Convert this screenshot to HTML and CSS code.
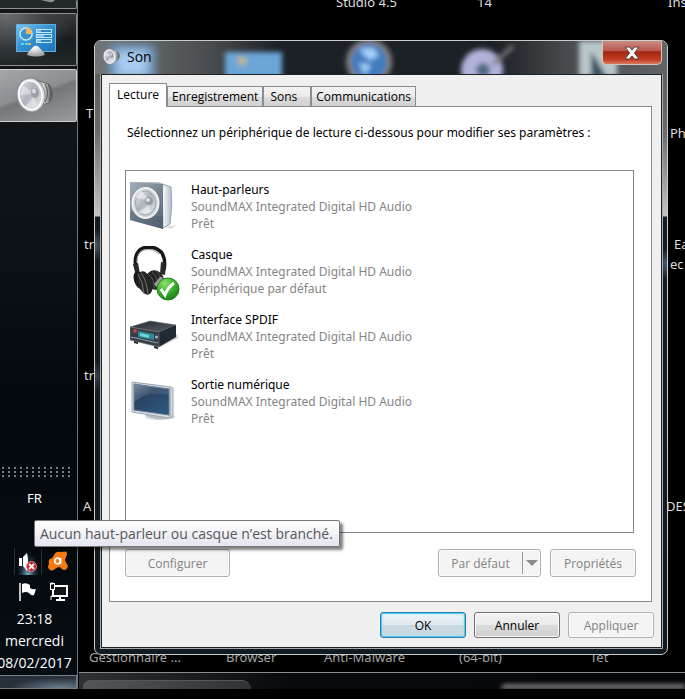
FILE: index.html
```html
<!DOCTYPE html>
<html lang="fr">
<head>
<meta charset="utf-8">
<title>Son</title>
<link rel="stylesheet" href="styles.css">
</head>
<body>
<div class="screen">
  <aside class="taskbar">
    <div class="task task-cut">
      <svg width="20" height="4" viewBox="0 0 20 4" aria-hidden="true"><path d="M3 0h14q-2 3-6 2z" fill="#8b8e90"/></svg>
    </div>
    <button class="task" aria-label="Panneau de configuration">
      <svg width="44" height="36" viewBox="0 0 44 36" aria-hidden="true">
        <defs>
          <linearGradient id="cp" x1="0" y1="0" x2="1" y2="1"><stop offset="0" stop-color="#7cc4ee"/><stop offset=".5" stop-color="#2f8fd0"/><stop offset="1" stop-color="#1f74b8"/></linearGradient>
          <radialGradient id="dome" cx=".4" cy=".2" r=".9"><stop offset="0" stop-color="#fff"/><stop offset="1" stop-color="#8f8f8f"/></radialGradient>
        </defs>
        <rect x="2.500" y="2.500" width="39" height="27" fill="url(#cp)" stroke="#5eaee0"/>
        <circle cx="12" cy="12" r="6" fill="#3a93d2" stroke="#c9ecfb" stroke-width="1.500"/>
        <path d="M12 12V5a7 7 0 0 1 6 7z" fill="#f8b55a"/>
        <g fill="#2f86c6" stroke="#bfe8fb"><rect x="22.500" y="7.500" width="15" height="3"/><rect x="22.500" y="12.500" width="15" height="3"/><rect x="22.500" y="17.500" width="15" height="3"/></g>
        <path d="M27 9h-4M30 14h-7M27 19h-4" stroke="#eafaff" stroke-width="1"/>
        <path d="M7 22h3M11 22h3" stroke="#56d4f4" stroke-width="2"/><path d="M14 22h3" stroke="#f4a94a" stroke-width="2"/>
        <path d="M13 33c1-4 4-5 6-8q3-3 6 0c2 3 5 4 6 8q-9 3-18 0z" fill="url(#dome)"/>
      </svg>
    </button>
    <button class="task task-active" aria-label="Son">
      <svg width="44" height="44" viewBox="0 0 44 44" aria-hidden="true">
        <defs>
          <linearGradient id="cone" x1="0" y1="0" x2="1" y2="1"><stop offset="0" stop-color="#e9ebee"/><stop offset=".45" stop-color="#aeb4bc"/><stop offset="1" stop-color="#e6e9ec"/></linearGradient>
          <linearGradient id="mag" x1="0" y1="0" x2="1" y2="0"><stop offset="0" stop-color="#777"/><stop offset=".5" stop-color="#ddd"/><stop offset="1" stop-color="#555"/></linearGradient>
        </defs>
        <g id="speaker">
          <path d="M20 5l11 4q5 0 7 7t-3 13l-8 2z" fill="url(#mag)" stroke="#666"/>
          <path d="M31 10q5 9 0 18M34 10q5 8 1 17" fill="none" stroke="#4f5358"/>
          <ellipse cx="17" cy="21" rx="14" ry="17" transform="rotate(-9 17 21)" fill="#d9dcdf" stroke="#85898e"/>
          <ellipse cx="16.500" cy="21" rx="11.500" ry="14.500" transform="rotate(-9 17 21)" fill="url(#cone)" stroke="#fff" stroke-width="1.500"/>
          <path d="M20 18L9 12l-3 9 13-1zM20 22l-9 11q7 4 12-2z" fill="#fff" opacity=".38"/>
          <ellipse cx="21" cy="19" rx="4" ry="5" fill="#9aa0a8"/><ellipse cx="20" cy="17" rx="2" ry="2.500" fill="#d8dce0"/>
        </g>
      </svg>
    </button>
    <div class="grow"></div>
    <div class="grip"></div>
    <div class="lang">FR</div>
    <div class="tray">
      <button class="tray-item tray-hot" aria-label="Haut-parleurs">
        <svg width="24" height="24" viewBox="0 0 24 24" aria-hidden="true"><path d="M3 8h3v8H3z" fill="#fff"/><path d="M7 7l4-4q2 9 0 18l-4-5z" fill="#fff"/><circle cx="15.500" cy="16.500" r="5" fill="#cf2029" stroke="#e98a8e" stroke-width=".8"/><path d="M13 14l5 5M18 14l-5 5" stroke="#fff" stroke-width="1.800"/></svg>
      </button>
      <button class="tray-item" aria-label="Antivirus">
        <svg width="24" height="24" viewBox="0 0 24 24" aria-hidden="true"><path d="M8 5Q10 1 14 2L20 1.500Q22 3 20 7L19 10Q20 13 22 16 21 20 18 20 16 20 14 17 11 17 9 19 5 22 3 19 1 17 3 14 2 10 4 9 7 8 8 5Z" fill="#f47a13"/><circle cx="11.500" cy="11" r="2.800" fill="none" stroke="#fff" stroke-width="1.700"/><path d="M14.500 8v6" stroke="#fff" stroke-width="1.700"/></svg>
      </button>
      <button class="tray-item" aria-label="Centre de maintenance">
        <svg width="24" height="24" viewBox="0 0 24 24" aria-hidden="true"><path d="M4 4v18" stroke="#fff" stroke-width="1.500"/><path d="M6 5q4-2 8 1v3q3 2 6 1l-2 6q-3 1-5-2-3-2-7 0z" fill="#fff"/></svg>
      </button>
      <button class="tray-item" aria-label="Réseau">
        <svg width="24" height="24" viewBox="0 0 24 24" aria-hidden="true" fill="none" stroke="#fff"><rect x="7" y="7" width="14" height="10" fill="#10161a" stroke-width="2"/><path d="M14 18v3M10 21h9" stroke-width="2"/><rect x="4.500" y="4.500" width="4" height="6" fill="#10161a"/><path d="M6 3v3M7 11v6H5v4"/></svg>
      </button>
    </div>
    <div class="clock"><span>23:18</span><span>mercredi</span><span>08/02/2017</span></div>
    <button class="show-desktop" aria-label="Afficher le Bureau"></button>
  </aside>

  <main class="desktop">
    <span class="label l-studio">Studio 4.5</span>
    <span class="label l-14">14</span>
    <span class="label l-ins">Ins</span>
    <span class="label l-t">T</span>
    <span class="label l-tr1">tr</span>
    <span class="label l-tr2">tr</span>
    <span class="label l-a">A</span>
    <span class="label l-ph">Ph</span>
    <span class="label l-ea">Ea</span>
    <span class="label l-ec">ec</span>
    <span class="label l-des">DES</span>
    <span class="label low l-gest">Gestionnaire ...</span>
    <span class="label low l-browser">Browser</span>
    <span class="label low l-anti">Anti-Malware</span>
    <span class="label low l-64">(64-bit)</span>
    <span class="label low l-ret">Tet</span>

    <div class="back-window">
      <div class="back-tab"></div>
      <div class="back-glow"></div>
    </div>

    <section class="dialog" aria-label="Son">
      <header class="titlebar">
        <svg class="glass" width="572" height="33" viewBox="0 0 572 33" aria-hidden="true">
          <defs><filter id="b" x="-30%" y="-30%" width="160%" height="160%"><feGaussianBlur stdDeviation="2.500"/></filter><filter id="bb" x="-50%" y="-50%" width="200%" height="200%"><feGaussianBlur stdDeviation="5"/></filter></defs>
          <g filter="url(#bb)"><rect x="14" y="4" width="46" height="34" fill="#6f9cc8"/><rect x="22" y="10" width="30" height="25" fill="#a9cdf0"/></g>
          <g filter="url(#b)">
            <rect x="130" y="11" width="57" height="26" fill="#6aa6d8"/><circle cx="147" cy="20" r="5" fill="#b9b48c"/>
            <circle cx="274" cy="21" r="23" fill="#857f7c"/><circle cx="274" cy="21" r="18" fill="#3f7cc0"/><path d="M264 8l14-1 6 8-10 4zM264 22l12 2-6 10z" fill="#a7d3fa"/>
            <circle cx="387" cy="29" r="21" fill="#b1b2da"/><circle cx="388" cy="29" r="7" fill="#4d6980"/><path d="M398 23L418 5" stroke="#777" stroke-width="4"/>
            <path d="M484 0h38v36h-38z" fill="#b9c6c9"/><path d="M496 10l16 26h-16z" fill="#3e5266"/>
          </g>
        </svg>
        <svg class="title-icon" width="20" height="20" viewBox="0 0 44 44" aria-hidden="true"><use href="#speaker"/></svg>
        <h1>Son</h1>
        <button class="close" aria-label="Fermer">
          <svg width="18" height="16" viewBox="0 0 18 16" aria-hidden="true"><path d="M2 2h4.500L9 5l2.500-3H16l-4.500 6L16 14h-4.500L9 11l-2.500 3H2l4.500-6z" fill="#f4f4f4" stroke="#5b3b3b"/></svg>
        </button>
      </header>

      <div class="client">
        <div class="tabs" role="tablist">
          <button role="tab" class="tab tab-on" aria-selected="true">Lecture</button>
          <button role="tab" class="tab">Enregistrement</button>
          <button role="tab" class="tab tab-sons">Sons</button>
          <button role="tab" class="tab">Communications</button>
        </div>
        <div class="panel">
          <p class="intro">Sélectionnez un périphérique de lecture ci-dessous pour modifier ses paramètres :</p>
          <ul class="devices">
            <li>
              <svg width="48" height="52" viewBox="0 0 48 52" aria-hidden="true">
                <defs>
                  <linearGradient id="box" x1="0" y1="0" x2="1" y2="1"><stop offset="0" stop-color="#a3adb7"/><stop offset=".5" stop-color="#7a8793"/><stop offset="1" stop-color="#566573"/></linearGradient>
                  <linearGradient id="side" x1="0" y1="0" x2="1" y2="0"><stop offset="0" stop-color="#fff"/><stop offset="1" stop-color="#aebccb"/></linearGradient>
                </defs>
                <path d="M34 46l13-2-6 4z" fill="#ddd"/>
                <path d="M1 1h28l9 4H20z" fill="#b6bec6"/><path d="M32 3l9 3q2 18-1 37l-7 4z" fill="url(#side)" stroke="#93a4b5"/>
                <path d="M0 1l33 2v45L0 39z" fill="url(#box)"/><path d="M0 30l33 6v12L0 39z" fill="#46586a" opacity=".4"/>
                <ellipse cx="15.500" cy="22" rx="13" ry="15" fill="#cdd2d6" stroke="#eef0f2" stroke-width="2"/>
                <ellipse cx="15.500" cy="22" rx="10" ry="12" fill="url(#cone)" stroke="#9fa5aa"/>
                <path d="M19 19L6 17q1-6 6-7zM19 24L8 31q7 4 12 0z" fill="#fff" opacity=".5"/><circle cx="19" cy="20" r="4" fill="#969ca2"/><circle cx="18" cy="19" r="2" fill="#e0e3e5"/>
              </svg>
              <div><strong>Haut-parleurs</strong><span>SoundMAX Integrated Digital HD Audio</span><span>Prêt</span></div>
            </li>
            <li>
              <svg width="52" height="56" viewBox="0 0 52 56" aria-hidden="true">
                <defs><radialGradient id="ok" cx=".35" cy=".25" r=".8"><stop offset="0" stop-color="#8be26a"/><stop offset=".6" stop-color="#35ac2b"/><stop offset="1" stop-color="#1c7d1a"/></radialGradient></defs>
                <path d="M6 23Q3 6 13 2q12-3 19 5 4 7 2 17" fill="none" stroke="#171717" stroke-width="3.500"/>
                <path d="M7 17Q6 7 14 4q9-2 15 4" fill="none" stroke="#999" stroke-width="1"/>
                <path d="M3 18l5-1 2 11-4 2zM31 16l5 1-1 12-5-1z" fill="#292929"/>
                <ellipse cx="9" cy="34" rx="5" ry="9" transform="rotate(-18 9 34)" fill="#1b1b1b"/><ellipse cx="15" cy="37" rx="7" ry="12" transform="rotate(-18 15 37)" fill="#262626"/>
                <path d="M8 28q5 8 6 20M11 27q6 8 7 21" stroke="#777" fill="none"/>
                <ellipse cx="25" cy="34" rx="9" ry="10" transform="rotate(-25 25 34)" fill="#242424"/><path d="M18 28q7 5 6 16M22 26q7 6 6 16M26 25q6 6 5 14" fill="none" stroke="#555"/>
                <path d="M24 38l6-7q3-1 3 3l-5 9z" fill="#999"/>
                <circle cx="38" cy="43" r="11" fill="url(#ok)" stroke="#238022"/><path d="M31 43l4 6q3-8 9-12" fill="none" stroke="#fff" stroke-width="3"/>
              </svg>
              <div><strong>Casque</strong><span>SoundMAX Integrated Digital HD Audio</span><span>Périphérique par défaut</span></div>
            </li>
            <li>
              <svg width="50" height="48" viewBox="0 -6 50 48" aria-hidden="true">
                <defs><linearGradient id="amp" x1="0" y1="0" x2="1" y2="1"><stop offset="0" stop-color="#23292f"/><stop offset="1" stop-color="#59616a"/></linearGradient></defs>
                <path d="M28 31l20-10-1-4-18 8z" fill="#ccc"/>
                <path d="M0 10L20 4l26 4-17 7z" fill="url(#amp)" stroke="#626b73" stroke-width=".6"/><path d="M29 15l17-7v12l-17 10z" fill="#222a31"/>
                <path d="M0 10l29 5v15L0 23z" fill="#353e46" stroke="#737b82" stroke-width=".6"/>
                <path d="M8 14l16 3v6L8 20z" fill="#2d8c98"/><path d="M10 16l9 2v3l-9-2z" fill="#6fd6dc"/><circle cx="5" cy="14" r="2" fill="#b94449"/><circle cx="26.500" cy="20" r="1.500" fill="#adb5bc"/><path d="M1 20l27 6" stroke="#9aa3ab"/><path d="M4 24v2l4 1v-2zM24 29v2l4 1v-2z" fill="#222"/>
              </svg>
              <div><strong>Interface SPDIF</strong><span>SoundMAX Integrated Digital HD Audio</span><span>Prêt</span></div>
            </li>
            <li>
              <svg width="50" height="48" viewBox="-1 -5 50 48" aria-hidden="true">
                <defs><linearGradient id="tv" x1="0" y1="0" x2=".7" y2="1"><stop offset="0" stop-color="#66809b"/><stop offset=".4" stop-color="#2b4362"/><stop offset="1" stop-color="#2c557f"/></linearGradient></defs>
                <ellipse cx="29" cy="36" rx="15" ry="3" fill="#ddd"/>
                <path d="M15 33l-1 1 13 4 11-1-1-3z" fill="#b9c1c9" stroke="#8d979f" stroke-width=".5"/>
                <path d="M1 1l39 5 2 1v29l-4 1L1 31z" fill="#d5dce2" stroke="#99a5b0"/><path d="M3 3l35 5v26L3 29z" fill="url(#tv)" stroke="#62758a"/><path d="M39 7v29" stroke="#88959f"/><path d="M3 3l35 5v6Q19 9 3 21z" fill="#fff" opacity=".1"/>
              </svg>
              <div><strong>Sortie numérique</strong><span>SoundMAX Integrated Digital HD Audio</span><span>Prêt</span></div>
            </li>
          </ul>
          <div class="panel-actions">
            <button class="btn btn-config" disabled>Configurer</button>
            <button class="btn btn-split" disabled><span>Par défaut</span><i></i></button>
            <button class="btn" disabled>Propriétés</button>
          </div>
        </div>
        <footer class="footer">
          <button class="btn btn-default">OK</button>
          <button class="btn">Annuler</button>
          <button class="btn" disabled>Appliquer</button>
        </footer>
      </div>
    </section>
  </main>
  <div class="tooltip" role="tooltip">Aucun haut-parleur ou casque n’est branché.</div>
</div>
</body>
</html>
```
FILE: styles.css
```css
* { box-sizing: border-box; }

body {
  margin: 0;
  background: #000;
  font-family: "Open Sans", "Noto Sans", sans-serif;
  font-size: 12px;
  line-height: 17px;
  color: #000;
}

button { font: inherit; padding: 0; margin: 0; }

.screen {
  position: relative;
  display: flex;
  height: 100vh;
  min-height: 620px;
  padding-bottom: 10px;
  overflow: hidden;
}

/* Taskbar */
.taskbar {
  display: flex;
  flex-direction: column;
  flex: 0 0 78px;
  overflow: hidden;
  background: linear-gradient(#12181c, #0a1014 40%, #03080c 60%, #060d12);
  border-right: 1px solid #70767b;
  color: #fff;
}

.task {
  flex: none;
  display: flex;
  align-items: center;
  justify-content: center;
  height: 53px;
  margin-bottom: 3px;
  padding-right: 5px;
  border: 1px solid #8c9093;
  border-left: 0;
  border-radius: 0 2px 2px 0;
  background: radial-gradient(ellipse at 10% 0, #6a6e70 0, #3d4143 40%, transparent 70%), linear-gradient(#33383b, #171c20 50%, #22272a);
}

.task-cut {
  align-items: flex-start;
  height: 9px;
  margin-bottom: 4px;
  border-top: 0;
  background: #22272a;
  padding-left: 25px;
}

.task-active {
  border-color: #d0d0d0;
  background: linear-gradient(160deg, #a5a7a8, #8b8d8f 45%, #747678 50%, #999b9c);
}

.grow { flex: 1; }

.grip {
  height: 12px;
  background: radial-gradient(circle, #777d81 1px, transparent 1px) 0 0 / 6px 4px;
  margin-right: 5px;
}

.lang {
  margin-top: 10px;
  padding-right: 8px;
  font-family: "Noto Sans", sans-serif;
  font-size: 13px;
  line-height: 20px;
  text-align: center;
}

.tray {
  display: grid;
  grid-template-columns: 28px 28px;
  gap: 2px;
  margin: 40px 0 4px;
  padding-left: 14px;
}

.tray-item {
  display: flex;
  align-items: center;
  justify-content: center;
  height: 27px;
  border: 0;
  background: none;
}

.tray-hot {
  background: radial-gradient(ellipse at 50% 100%, #7ba7c4 0, #1d3444 35%, transparent 60%);
  border-left: 1px solid #26323b;
  border-right: 1px solid #26323b;
}

.clock {
  display: flex;
  flex-direction: column;
  align-items: center;
  width: 69px;
  font-size: 14px;
  line-height: 22px;
  white-space: nowrap;
}

.show-desktop {
  flex: none;
  height: 14px;
  margin-top: 1px;
  border: 1px solid #777e83;
  border-left: 0;
  background: radial-gradient(ellipse at 80% 100%, #6c7f90, #273039 60%);
}

/* Desktop */
.desktop {
  position: relative;
  flex: 1;
  min-width: 0;
  overflow: hidden;
}

.label {
  position: absolute;
  color: #ddd;
  font-family: "Noto Sans", sans-serif;
  font-size: 13px;
  line-height: 18px;
  white-space: nowrap;
}

.low {
  bottom: 23px;
  color: #a4a4a4;
}

.l-studio { left: 258px; top: -7px; }
.l-14 { left: 399px; top: -7px; }
.l-ins { left: 590px; top: -7px; }
.l-t { left: 8px; top: 104px; }
.l-tr1 { left: 6px; top: 235px; }
.l-tr2 { left: 6px; top: 366px; }
.l-a { left: 5px; top: 497px; }
.l-ph { left: 592px; top: 124px; }
.l-ea { left: 596px; top: 235px; }
.l-ec { left: 592px; top: 255px; }
.l-des { left: 588px; top: 497px; }
.l-gest { left: 11px; }
.l-browser { left: 148px; }
.l-anti { left: 246px; }
.l-64 { left: 381px; }
.l-ret { left: 512px; }

.back-window {
  position: absolute;
  left: 1px;
  right: 0;
  bottom: 0;
  height: 17px;
  display: flex;
  align-items: flex-end;
  justify-content: space-between;
  overflow: hidden;
  border-top: 1px solid #8c8c8c;
  background: linear-gradient(90deg, #303133, #08090d 35%, #07080c);
}

.back-tab {
  width: 168px;
  height: 9px;
  margin-left: 4px;
  border-top: 1px solid #55585b;
  border-radius: 8px 10px 0 0;
  background: radial-gradient(ellipse at 15% 120%, #aab0da 0, transparent 12%), linear-gradient(90deg, #54565a, #303236);
}

.back-glow {
  width: 184px;
  height: 5px;
  border-radius: 8px 0 0 0;
  background: #777;
  filter: blur(2px);
}

/* Dialog window */
.dialog {
  position: absolute;
  inset: 40px 17px 34px 16px;
  display: flex;
  flex-direction: column;
  padding: 0 5px 6px 6px;
  border: 1px solid #c9cccd;
  border-radius: 7px;
  background:
    radial-gradient(ellipse 12px 16px at 0 204px, #495864, transparent),
    radial-gradient(ellipse 12px 16px at 0 335px, #39444e, transparent),
    radial-gradient(ellipse 12px 16px at 100% 223px, #495d70, transparent),
    linear-gradient(#55585a 0, #696b6c 90px, #c4c5c5 175px, #141c21 176px, #101a20);
}

.titlebar {
  position: relative;
  display: flex;
  align-items: flex-start;
  height: 33px;
  margin: 0 -5px 0 -6px;
  padding: 0 5px 0 7px;
  border-radius: 6px 6px 0 0;
  overflow: hidden;
  background: linear-gradient(90deg, #717374, #4a4d4f 20%, #1c2126 32%, #1c2126 70%, #4a4d4f 83%, #626567);
}

.glass {
  position: absolute;
  left: 0;
  top: 0;
}

.title-icon {
  position: relative;
  margin-top: 6px;
}

.titlebar h1 {
  position: relative;
  flex: 1;
  margin: 6px 0 0 5px;
  font-size: 14px;
  font-weight: 400;
  line-height: 20px;
}

.close {
  position: relative;
  display: flex;
  align-items: center;
  justify-content: center;
  width: 60px;
  height: 24px;
  border: 1px solid #d6c3c0;
  border-top: 0;
  border-radius: 0 0 5px 5px;
  background: linear-gradient(#c98c84, #b75548 45%, #a12510 46%, #c13d22 80%, #d77a5e);
}

.client {
  flex: 1;
  display: flex;
  flex-direction: column;
  min-height: 0;
  padding: 8px 7px 9px;
  border: 1px solid #1c2226;
  outline: 1px solid #a7abad;
  background: #f0f0f0;
}

.tabs {
  position: relative;
  display: flex;
  align-items: flex-end;
  margin-bottom: -1px;
}

.tab {
  height: 21px;
  padding: 0 4px;
  border: 1px solid #898c95;
  background: linear-gradient(#f3f3f3, #ebebeb 50%, #dcdcdc 51%, #d0d0d0);
  white-space: nowrap;
}

.tab-on {
  height: 24px;
  padding: 0 7px 2px;
  border-bottom: 0;
  background: #fff;
}

.tab-sons { padding: 0 13px 0 6px; }

.panel {
  flex: 1;
  display: flex;
  flex-direction: column;
  min-height: 0;
  margin-right: 2px;
  padding: 17px 16px 24px 15px;
  border: 1px solid #898c95;
  background: #fff;
}

.intro {
  margin: 0 0 29px 2px;
  font-family: "Noto Sans", sans-serif;
  white-space: nowrap;
}

.devices {
  flex: 1;
  display: flex;
  flex-direction: column;
  gap: 14px;
  min-height: 0;
  margin: 0 1px 16px 0;
  padding: 10px 4px;
  overflow: hidden;
  border: 1px solid #828790;
  font-family: "Noto Sans", sans-serif;
  list-style: none;
}

.devices li {
  display: grid;
  grid-template-columns: 61px 1fr;
  height: 51px;
}

.devices div {
  display: flex;
  flex-direction: column;
}

.devices strong { font-weight: 400; }
.devices span { color: #858585; }

.panel-actions {
  display: flex;
  gap: 9px;
  margin-right: -1px;
}

.btn {
  width: 86px;
  height: 26px;
  border: 1px solid #707070;
  border-radius: 3px;
  background: linear-gradient(#f2f2f2, #ebebeb 49%, #dddddd 50%, #cfcfcf);
  box-shadow: inset 0 0 0 1px #fbfbfb;
  color: #000;
}

.btn:disabled {
  border-color: #adb2b5;
  background: #f4f4f4;
  color: #838383;
}

.panel-actions .btn { height: 28px; }

.panel-actions .btn-config {
  width: 105px;
  margin-right: auto;
}

.panel-actions .btn-split {
  display: flex;
  align-items: center;
  width: 103px;
}

.btn-split span {
  flex: 1;
  text-align: center;
}

.btn-split i {
  display: flex;
  align-items: center;
  justify-content: center;
  width: 18px;
  height: 22px;
  border-left: 1px solid #9a9a9a;
}

.btn-split i::after {
  content: "";
  border: 6px solid transparent;
  border-top-color: #8a8a8a;
  border-bottom: 0;
}

.footer {
  display: flex;
  justify-content: flex-end;
  gap: 8px;
  margin-top: 10px;
}

.btn-default {
  border-color: #2d7fa9;
  background: linear-gradient(#eef4f8, #dfe9ef 49%, #cbd8e0 50%, #c9d9e2);
  box-shadow: inset 0 0 0 1px #4fcdf2, inset 0 0 2px 1px #8fe0f7;
}

.tooltip {
  position: absolute;
  left: 34px;
  bottom: 152px;
  padding: 3px 6px 2px 5px;
  border: 1px solid #767676;
  border-radius: 2px;
  background: linear-gradient(#fff, #e4e5f0);
  box-shadow: 3px 3px 3px rgba(0, 0, 0, .5);
  color: #575757;
  font-size: 14px;
  line-height: 20px;
  white-space: nowrap;
}
```
